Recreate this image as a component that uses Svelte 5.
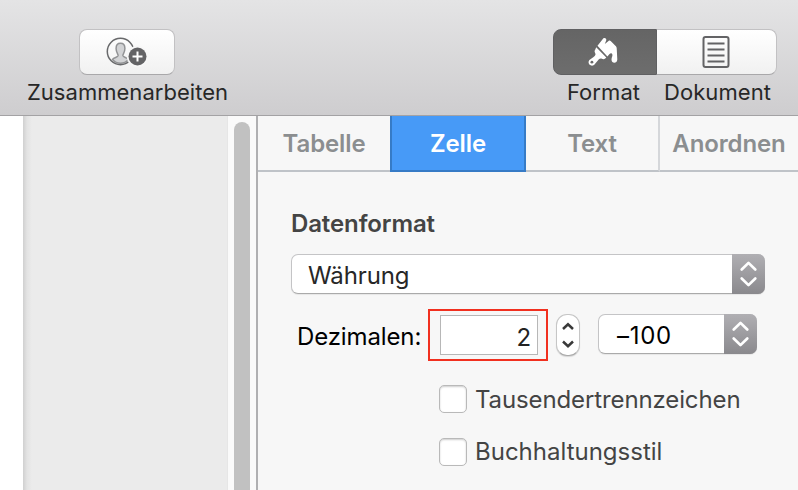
<script lang="ts">
  const tabs = [
    { id: 'table', label: 'Tabelle' },
    { id: 'cell', label: 'Zelle' },
    { id: 'text', label: 'Text' },
    { id: 'arrange', label: 'Anordnen' },
  ];

  let activeTab = $state('cell');
  let decimals = $state('2');
  let thousands = $state(false);
  let accounting = $state(false);
</script>

{#snippet chevrons()}
  <span class="chevrons">
    <svg viewBox="0 0 33 40" width="33" height="40"><path d="M9.700 15.500 16.500 8.900l6.800 6.600M9.700 24.500l6.800 6.600 6.800-6.600" /></svg>
  </span>
{/snippet}

<div class="window">
  <header class="toolbar">
    <div class="tool collaborate">
      <button class="tool-button" aria-label="Zusammenarbeiten">
        <svg viewBox="0 0 42 30" width="42" height="30">
          <path class="person" d="M6.500 22.500c1.500-2.200 5.200-1.900 5.600-3.800.3-1.700-2-2.800-2-7.200 0-3.600 1.400-5.200 4.400-5.200s4.400 1.600 4.400 5.200c0 4.400-2.300 5.500-2 7.200.4 1.900 3.800 1.600 5.600 3.800-4.500 5.100-11.500 5.100-16 0z" />
          <circle class="ring" cx="14.500" cy="14.500" r="13.200" />
          <circle class="halo" cx="31.500" cy="19.500" r="10.700" />
          <circle class="badge" cx="31.500" cy="19.500" r="9" />
          <path class="plus" d="M31.500 14.500v10M26.500 19.500h10" />
        </svg>
      </button>
      <span class="tool-label">Zusammenarbeiten</span>
    </div>
    <div class="inspector-switch">
      <div class="segments">
        <button class="segment pressed" aria-label="Format">
          <svg viewBox="0 0 30 30" width="30" height="30">
            <path class="brush" d="M9.500 8.800 15.200 1.500c1.500-1.300 3.700.1 3 2L16.800 7l3.700-3.100c.8-.6 1.500-.5 2.200.1l4.700 4.700c.9.800 1.200 1.500 1.300 2.500l.6 11.300c-.2 4.300-5.800 4.300-5.800 0 0-2.500 1.400-3.500.8-5.300-.5-1.200-1.900-1.100-3 .1l-1.900 2.200z" />
            <path class="brush" d="m8.200 10.300 10.100 10.100-1.100 1.100c-1 1-2.200 1-3.300.3-1-.6-2.200-.3-3 .5l-4.200 5C3.900 31-1.600 26.800 1.400 23.100c1.200-1.500 3.500-2.500 5.300-4.200 1-1 1-1.900.4-3-.6-1.200-.8-2 .1-3.200z" />
            <circle class="hole" cx="3.900" cy="25.200" r="1.400" />
          </svg>
        </button>
        <button class="segment document" aria-label="Dokument">
          <svg viewBox="0 0 28 34" width="28" height="34">
            <rect class="sheet" x="1.500" y="2" width="25" height="30" rx="2" />
            <path class="sheet" d="M5.500 8.500h17M5.500 14.500h17M5.500 20.500h17M5.500 26.500h17" />
          </svg>
        </button>
      </div>
      <div class="segment-labels">
        <span class="format-label">Format</span>
        <span class="document-label">Dokument</span>
      </div>
    </div>
  </header>

  <main class="workspace">
    <div class="sheet-edge"></div>
    <div class="canvas"></div>
    <div class="scrollbar"><div class="thumb"></div></div>

    <aside class="inspector">
      <nav class="tabs">
        {#each tabs as tab (tab.id)}
          <button class="tab {tab.id}" class:active={activeTab === tab.id} onclick={() => activeTab = tab.id}><span>{tab.label}</span></button>
        {/each}
      </nav>

      <section class="cell-format">
        <h2>Datenformat</h2>
        <button class="popup format-popup"><span class="value">Währung</span>{@render chevrons()}</button>

        <div class="decimals-row">
          <label for="decimals">Dezimalen:</label>
          <div class="highlight"><input id="decimals" type="text" bind:value={decimals}></div>
          <button class="stepper" aria-label="Dezimalen">
            <svg viewBox="0 0 24 42" width="24" height="42"><path d="m7 15 5-4.700L17 15M7 27.500l5 4.700 5-4.700" /></svg>
          </button>
          <button class="popup negative-popup"><span class="value">–100</span>{@render chevrons()}</button>
        </div>

        <div class="options">
          <label class="option"><input type="checkbox" bind:checked={thousands}><span class="thousands">Tausendertrennzeichen</span></label>
          <label class="option"><input type="checkbox" bind:checked={accounting}><span class="accounting">Buchhaltungsstil</span></label>
        </div>
      </section>
    </aside>
  </main>
</div>

<style>
  :global(body){margin:0;overflow:hidden}
  *{box-sizing:border-box}
  button,input{margin:0;padding:0;border:0;font:inherit;letter-spacing:inherit;color:inherit;background:none}
  svg{display:block;fill:none}

  .window{display:flex;flex-direction:column;width:798px;height:490px;overflow:hidden;background:#f7f7f7;color:#272727;font:400 22px/28px Inter,"Liberation Sans",sans-serif;white-space:nowrap}

  .toolbar{display:flex;justify-content:space-between;height:116px;padding:29px 21px 0 27px;border-bottom:1px solid #a3a2a4;background:linear-gradient(#e4e4e5,#cecdcf)}
  .tool{display:flex;flex-direction:column;align-items:center;width:200px}
  .tool-button{display:flex;align-items:center;justify-content:center;width:96px;height:46px;border:1px solid #c2c1c3;border-bottom-color:#a9a8aa;border-radius:8px;background:linear-gradient(#fff,#f1f1f1)}
  .tool-label{margin:3px 0 0 1px;letter-spacing:.03px}
  .person{fill:#d2d3d5;stroke:#929395;stroke-width:1.5}
  .ring{stroke:#68696b;stroke-width:1.5}
  .halo{fill:#f7f7f7}
  .badge{fill:#636365}
  .plus{stroke:#fff;stroke-width:2}
  .inspector-switch{width:224px}
  .segments{display:grid;grid-template-columns:104px 120px;height:46px;border-radius:8px}
  .segment{display:flex;align-items:center;justify-content:center;border:1px solid #c2c1c3;border-left:0;border-bottom-color:#a9a8aa;border-radius:0 8px 8px 0;background:linear-gradient(#fff,#f1f1f1)}
  .segment.pressed{padding-right:4px;border:1px solid #606062;border-radius:8px 0 0 8px;background:linear-gradient(#656565,#6d6d6d)}
  .segment.document{padding-right:2px}
  .brush{fill:#fff}
  .hole{fill:#6a6a6a}
  .sheet{stroke:#636365;stroke-width:2}
  .segment-labels{display:grid;grid-template-columns:101px 127px;margin-top:3px;text-align:center;letter-spacing:.08px}

  .workspace{display:flex;flex:1;min-height:0}
  .sheet-edge{width:23px;background:#fff}
  .canvas{width:204px;background:linear-gradient(90deg,#d0d0d0,#e3e3e3 4px,#ebebeb 9px)}
  .scrollbar{width:29px;padding:6px 6px 0;border-left:1px solid #e6e6e6;background:#fafafa}
  .thumb{width:16px;height:400px;border-radius:8px 8px 0 0;background:#c1c1c1}
  .inspector{flex:1;border-left:2px solid #b0b0b2;background:#f7f7f7;font-size:24px;letter-spacing:-.12px}

  .tabs{display:grid;grid-template-columns:132px 136px 134px 138px;height:56px;color:#8b8e90;font-weight:600}
  .tab{display:flex;align-items:center;justify-content:center;padding-top:2px;border-bottom:2px solid #bfc3c8}
  .tab.text{border-right:2px solid #d5d7da}
  .tab.active{border:solid #367bc6;border-width:0 2px 2px;background:#479af7;color:#fff}

  .cell-format{padding:38px 33px 0}
  h2{margin:0;color:#444;font-size:24px;font-weight:600;line-height:28px}
  .popup{display:flex;align-items:stretch;height:40px;border:1px solid #c4c4c6;border-bottom-color:#aaa;border-radius:7px;background:#fff;box-shadow:0 1px 1px #0001}
  .popup .value{flex:1;align-self:center;padding:4px 0 0 16px;text-align:left}
  .chevrons{width:33px;height:40px;margin:-1px -1px 0 0;border-radius:0 7px 7px 0;background:linear-gradient(#b0afb3,#8a898d)}
  .chevrons svg{stroke:#fff;stroke-width:2.700;stroke-linecap:round;stroke-linejoin:round}
  .format-popup{width:474px;margin-top:16px}

  .decimals-row{display:flex;margin-top:15px;color:#000}
  .decimals-row label{width:131px;padding:14px 0 0 6px}
  .highlight{width:120px;height:52px;margin-left:6px;padding:4px 10px 0 10px;border:2px solid #f1301f}
  .highlight input{width:98px;height:40px;padding:4px 6px 0 0;border:1px solid #b7b7b7;outline:0;background:#fff;color:#222;text-align:right}
  .stepper{width:24px;height:42px;margin:5px 0 0 8px;border:1px solid #c6c6c6;border-bottom-color:#aaa;border-radius:11px;background:#fff;box-shadow:0 1px 1px #0002}
  .stepper svg{margin:-1px;stroke:#393939;stroke-width:2.500}
  .negative-popup{width:159px;margin:5px 0 0 18px;letter-spacing:.7px}
  .negative-popup .value{padding-left:18px}

  .options{display:flex;flex-direction:column;gap:25px;padding:24px 0 0 148px;color:#444}
  .option{display:flex;align-items:center;height:28px}
  .option input{appearance:none;width:28px;height:28px;margin-right:8px;border:1px solid #b9b9b9;border-radius:5px;background:#fff;box-shadow:inset 0 1px 2px #0003}
  .option input:checked{background:#479af7}
  .thousands{margin-top:2px}
  .accounting{margin-top:-1px;letter-spacing:0}
</style>
